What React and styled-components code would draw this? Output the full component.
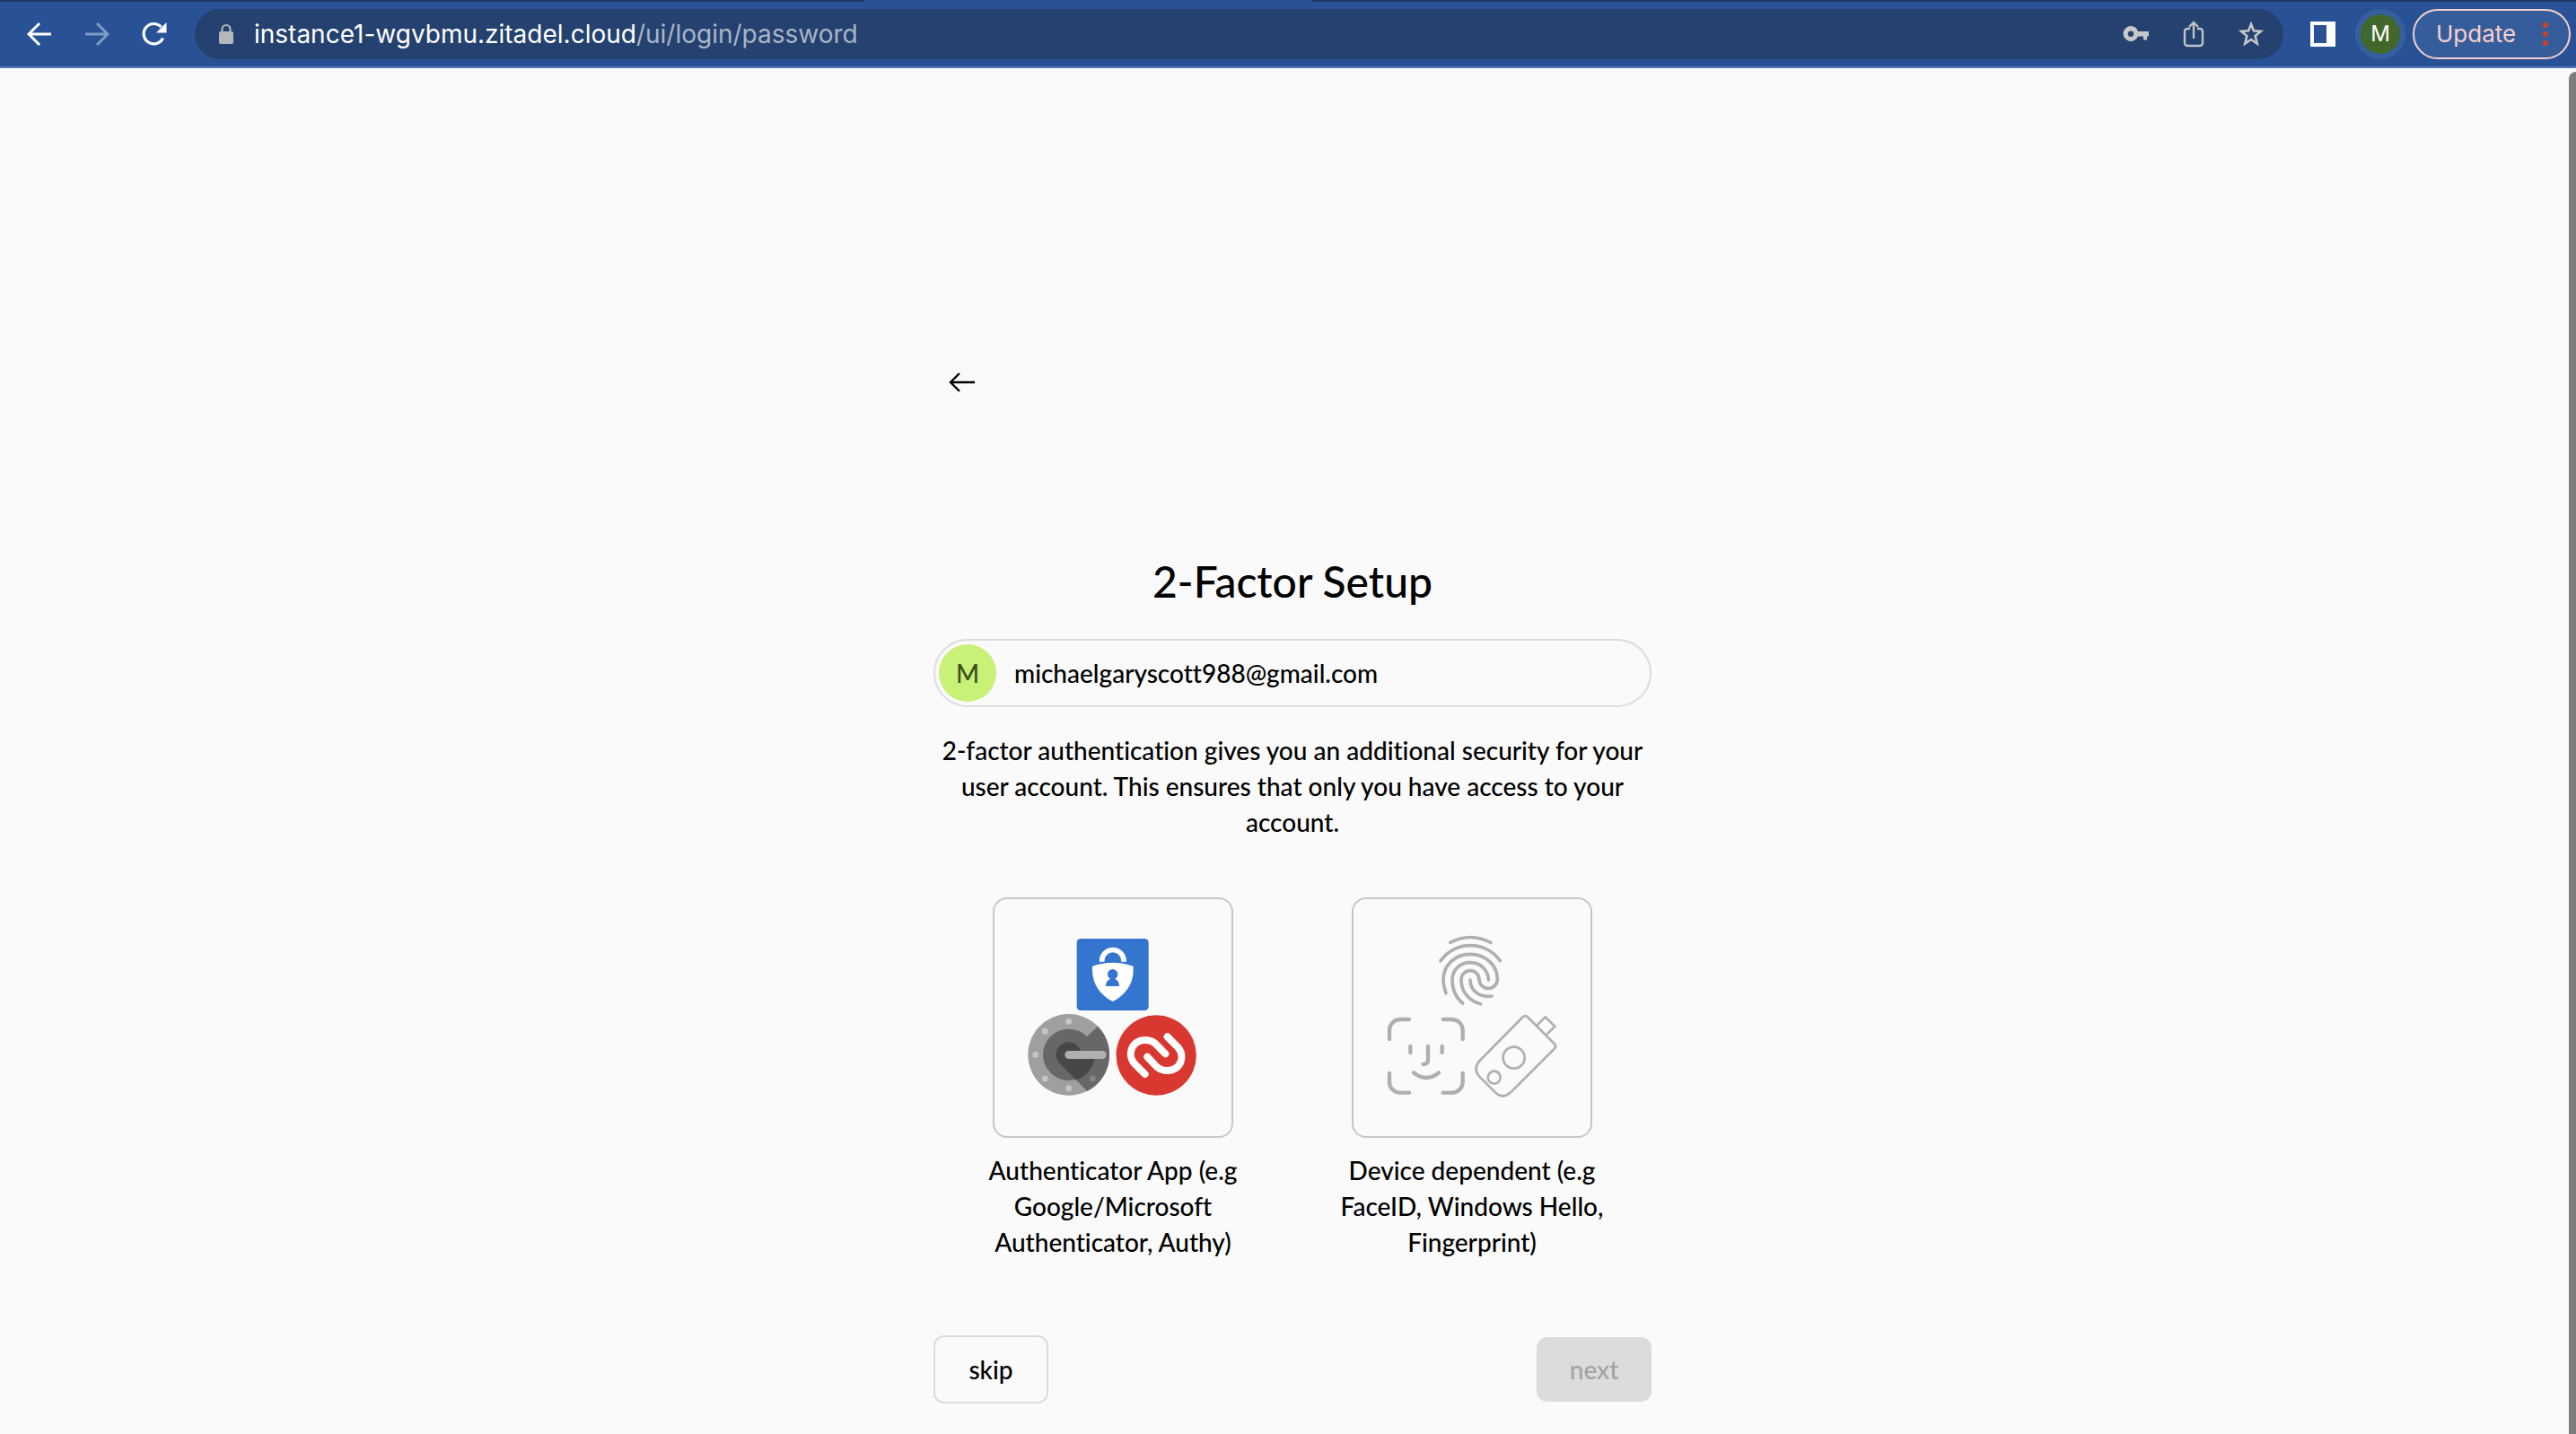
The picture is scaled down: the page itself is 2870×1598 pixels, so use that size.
import React from "react";
import styled, { createGlobalStyle } from "styled-components";

const GlobalStyle = createGlobalStyle`
  *, *::before, *::after { box-sizing: border-box; }
  body { margin: 0; background: #fafafa; overflow: hidden; }
  button, input { font: inherit; }
`;

const Page = styled.div`
  position: relative;
  min-height: 100vh;
  display: flex;
  flex-direction: column;
  font-family: Lato, sans-serif;
  font-size: 28px;
  font-weight: 500;
  font-variant-ligatures: none;
  line-height: 40px;
  color: #000;
`;

const TabStrip = styled.div`
  display: flex;
  height: 2px;
  background: #295296;
`;
const InactiveTabs = styled.span`
  flex: ${(p) => p.$share};
  background: #1c365f;
  border-radius: ${(p) => (p.$left ? "0 0 4px 0" : "0 0 0 4px")};
`;
const ActiveTab = styled.span`
  flex: 499;
`;

const Toolbar = styled.header`
  display: flex;
  align-items: center;
  height: 74px;
  padding: 8px 6px 8px 26px;
  background: #295296;
  border-bottom: 2px solid #5279b0;
  font-family: Inter, sans-serif;
  font-weight: 400;
`;
const IconButton = styled.button`
  display: grid;
  place-items: center;
  width: 36px;
  height: 36px;
  padding: 0;
  border: 0;
  background: none;
  color: ${(p) => p.$color || "#fff"};
`;
const NavButtons = styled.nav`
  display: flex;
  gap: 28px;
  margin-right: 27px;
`;
const AddressBar = styled.div`
  flex: 1;
  display: flex;
  align-items: center;
  height: 56px;
  padding: 0 18px 0 26px;
  border-radius: 28px;
  background: #24416f;
`;
const Url = styled.a`
  flex: 1;
  margin-left: 22px;
  font-size: 28px;
  line-height: 36px;
  color: #a9b5c7;
  text-decoration: none;
`;
const Domain = styled.span`
  color: #fff;
`;
const AddressActions = styled.div`
  display: flex;
  gap: 28px;
`;
const ToolbarEnd = styled.div`
  display: flex;
  align-items: center;
  margin-left: 26px;
`;
const Profile = styled.button`
  width: 56px;
  height: 56px;
  margin: 0 8px 0 18px;
  padding: 0;
  border: 6px solid #365f9f;
  border-radius: 50%;
  background: #41682a;
  color: #fff;
  font-size: 24px;
  line-height: 44px;
`;
const UpdateButton = styled.button`
  display: flex;
  align-items: center;
  justify-content: space-between;
  width: 176px;
  height: 56px;
  padding: 0 23px 0 24px;
  border: 2px solid #f6d0ce;
  border-radius: 28px;
  background: #365d9b;
  color: #f6d0ce;
  font-size: 26px;
`;

const ScrollThumb = styled.div`
  position: absolute;
  top: 80px;
  right: 0;
  bottom: 0;
  width: 8px;
  border-radius: 8px 0 0 0;
  background: #7d7d7d;
`;

const Main = styled.main`
  flex: 1;
  padding: 318px 0 34px 10px;
`;
const Form = styled.form`
  width: 800px;
  max-width: 100%;
  margin: 0 auto;
`;
const BackButton = styled.button`
  display: grid;
  place-items: center;
  width: 64px;
  height: 64px;
  padding: 0;
  border: 0;
  background: none;
  color: #000;
`;
const Title = styled.h1`
  margin: 158px 0 32px;
  font-size: 48px;
  font-weight: 500;
  line-height: 64px;
  text-align: center;
`;
const Account = styled.div`
  display: flex;
  align-items: center;
  gap: 20px;
  height: 76px;
  padding: 4px;
  border: 2px solid #dcdcdc;
  border-radius: 38px;
`;
const Avatar = styled.span`
  width: 64px;
  height: 64px;
  border-radius: 50%;
  background: #c9f077;
  color: #3b4f1a;
  line-height: 64px;
  text-align: center;
`;
const Description = styled.p`
  margin: 28px 0 64px;
  text-align: center;
`;
const Options = styled.div`
  display: grid;
  grid-template-columns: 1fr 1fr;
`;
const Option = styled.label`
  display: flex;
  flex-direction: column;
  align-items: center;
  gap: 16px;
  text-align: center;
`;
const HiddenRadio = styled.input`
  position: absolute;
  opacity: 0;
`;
const OptionCard = styled.span`
  display: flex;
  width: 268px;
  height: 268px;
  border: 2px solid #c7c7c7;
  border-radius: 16px;
`;
const OptionText = styled.span`
  width: 300px;
`;
const Actions = styled.div`
  display: flex;
  align-items: center;
  justify-content: space-between;
  margin-top: 84px;
`;
const ActionButton = styled.button`
  width: 128px;
  height: ${(p) => (p.$outlined ? 76 : 72)}px;
  padding: 0;
  border: ${(p) => (p.$outlined ? "2px solid #dcdcdc" : "0")};
  border-radius: 12px;
  background: ${(p) => (p.$outlined ? "transparent" : "#dcdcdc")};
  color: ${(p) => (p.$outlined ? "#000" : "#a3a3a3")};
`;

const Arrow = ({ flip }) => (
  <svg width="28" height="28" viewBox="0 0 28 28" fill="none" stroke="currentColor" strokeWidth="3">
    <path d={flip ? "M1 14H25M14 2L26 14L14 26" : "M27 14H3M14 2L2 14L14 26"} />
  </svg>
);

const ReloadIcon = () => (
  <svg width="30" height="30" viewBox="0 0 30 30">
    <path d="M24.5 19.5A11.2 11.2 0 1 1 22.5 7" fill="none" stroke="currentColor" strokeWidth="3.2" />
    <path d="M28.500 2V13.500H17Z" fill="currentColor" />
  </svg>
);

const LockIcon = () => (
  <svg width="18" height="24" viewBox="0 0 18 24">
    <path d="M4.500 10V6.500a4.500 4.500 0 0 1 9 0V10" fill="none" stroke="#b4b7bc" strokeWidth="2.200" />
    <rect x="1" y="9" width="16" height="14" rx="2" fill="#b4b7bc" />
  </svg>
);

const KeyIcon = () => (
  <svg width="30" height="20" viewBox="0 0 30 20">
    <path
      fill="currentColor"
      fillRule="evenodd"
      d="M9 1a8.500 8.500 0 1 0 8 11.500H23v4h4v-4h2V7H17A8.500 8.500 0 0 0 9 1Zm0 5.500a3.200 3.200 0 1 1 0 6.400a3.200 3.200 0 0 1 0-6.400Z"
    />
  </svg>
);

const ShareIcon = () => (
  <svg width="24" height="32" viewBox="0 0 24 32" fill="none" stroke="currentColor" strokeWidth="2.400">
    <path d="M8 10H5a3 3 0 0 0-3 3V26a3 3 0 0 0 3 3H19a3 3 0 0 0 3-3V13a3 3 0 0 0-3-3H16M12 21V3M7 8L12 3L17 8" />
  </svg>
);

const StarIcon = () => (
  <svg width="30" height="30" viewBox="0 0 30 30" fill="none" stroke="currentColor" strokeWidth="2.600">
    <path d="M15 4L17.900 11.300L25.900 11.900L19.700 17L21.700 25.500L15 21L8.300 25.500L10.300 17L4.100 11.900L12.100 11.300Z" />
  </svg>
);

const SidePanelIcon = () => (
  <svg width="28" height="28" viewBox="0 0 28 28">
    <path fill="#fff" fillRule="evenodd" d="M0 0H28V28H0ZM4 4V24H18V4Z" />
  </svg>
);

const DotsIcon = () => (
  <svg width="6" height="28" viewBox="0 0 6 28" fill="#cf402e">
    <circle cx="3" cy="4" r="3" />
    <circle cx="3" cy="14" r="3" />
    <circle cx="3" cy="24" r="3" />
  </svg>
);

const BackArrow = () => (
  <svg width="32" height="24" viewBox="0 0 32 24" fill="none" stroke="currentColor" strokeWidth="2.400">
    <path d="M30 12H3M13 2L3 12L13 22" />
  </svg>
);

const AuthenticatorArt = () => (
  <svg width="264" height="264" viewBox="54 36 792 792" aria-hidden="true">
    <rect x="329" y="168" width="240" height="240" rx="13" fill="#3375cf" />
    <path d="M413 245V242A36 36 0 0 1 486 242V245" fill="none" stroke="#fff" strokeWidth="17" />
    <path d="M381 260Q449 237 518 260V274C518 320 491 358 449 378C408 358 381 320 381 274Z" fill="#fff" />
    <circle cx="449" cy="287" r="17" fill="#3375cf" />
    <path d="M426 327C426 315 431 307 441 302V296H457V302C467 307 471 315 471 327Z" fill="#3375cf" />

    <circle cx="302" cy="556" r="136" fill="#9f9f9f" />
    <circle cx="302" cy="556" r="86" fill="#676767" />
    <path d="M302 556L364 494L399 461A136 136 0 0 1 364 678L302 616Z" fill="#676767" />
    <path d="M302 514A42 42 0 0 0 272 586L326 640A87 87 0 0 0 388 570L341 541A42 42 0 0 0 302 514Z" fill="#474747" />
    <rect x="289" y="543" width="139" height="27" rx="13.500" fill="#b0b0b0" />
    <g fill="#c4c4c4">
      <circle cx="302" cy="445" r="10.500" />
      <circle cx="223" cy="478" r="10.500" />
      <circle cx="191" cy="556" r="10.500" />
      <circle cx="223" cy="636" r="10.500" />
      <circle cx="302" cy="668" r="10.500" />
    </g>
    <circle cx="382" cy="636" r="10" fill="#858585" />

    <circle cx="594.500" cy="558" r="134" fill="#d93831" />
    <g fill="none" stroke="#fff" strokeWidth="24" strokeLinecap="round">
      <path d="M557 621L524 588C495 559 511 507 558 507C576 507 588 514 597 524L625 553" />
      <path d="M632 496L665 529C694 558 678 609 631 609C613 609 601 602 592 592L565 563" />
    </g>
  </svg>
);

const DeviceArt = () => (
  <svg
    width="264"
    height="264"
    viewBox="54 36 792 792"
    fill="none"
    stroke="#afafaf"
    strokeLinecap="round"
    aria-hidden="true"
  >
    <g strokeWidth="11">
      <path d="M377 181Q444 146 513 181" />
      <path d="M345 242C395 174 495 174 544 242" />
      <path d="M363 350C358 335 354 322 354 306C354 255 394 220 444 220C497 220 535 258 535 304A30.500 30.500 0 0 1 474 304A30 30 0 0 0 414 306C414 346 440 376 479 386" />
      <path d="M419 384C396 365 384 338 384 306C384 272 410 248 444 248C480 248 505 275 505 306" />
      <path d="M444 306C444 341 475 366 516 360" />
    </g>
    <g strokeWidth="13">
      <path d="M174 504V474A36 36 0 0 1 210 438H240" />
      <path d="M353 438H383A36 36 0 0 1 419 474V504" />
      <path d="M174 618V647A36 36 0 0 0 210 683H240" />
      <path d="M353 683H383A36 36 0 0 0 419 647V618" />
      <path d="M244 528V549M350 528V549" />
      <path d="M303 528V573Q303 588 287 588" />
      <path d="M255 616Q297 650 339 616" />
    </g>
    <g strokeWidth="8" strokeLinecap="butt">
      <path d="M620 430Q628 423 636 430L726 520Q733 527 726 535L579 682Q552 706 528 682L474 628Q453 604 474 578Z" />
      <circle cx="590" cy="566" r="36" />
      <circle cx="524" cy="632" r="21" />
      <path d="M668 457L695 430L727 461L700 488" />
    </g>
  </svg>
);

export default function App() {
  return (
    <Page>
      <GlobalStyle />
      <TabStrip>
        <InactiveTabs $share={963} $left />
        <ActiveTab />
        <InactiveTabs $share={1408} />
      </TabStrip>
      <Toolbar>
        <NavButtons>
          <IconButton aria-label="Back">
            <Arrow />
          </IconButton>
          <IconButton aria-label="Forward" $color="#7f9cc4">
            <Arrow flip />
          </IconButton>
          <IconButton aria-label="Reload">
            <ReloadIcon />
          </IconButton>
        </NavButtons>
        <AddressBar>
          <LockIcon />
          <Url href="#">
            <Domain>instance1-wgvbmu.zitadel.cloud</Domain>/ui/login/password
          </Url>
          <AddressActions>
            <IconButton aria-label="Passwords" $color="#c6c7c9">
              <KeyIcon />
            </IconButton>
            <IconButton aria-label="Share" $color="#c0c2c6">
              <ShareIcon />
            </IconButton>
            <IconButton aria-label="Bookmark" $color="#c6c7c9">
              <StarIcon />
            </IconButton>
          </AddressActions>
        </AddressBar>
        <ToolbarEnd>
          <IconButton aria-label="Side panel">
            <SidePanelIcon />
          </IconButton>
          <Profile>M</Profile>
          <UpdateButton>
            Update
            <DotsIcon />
          </UpdateButton>
        </ToolbarEnd>
      </Toolbar>
      <Main>
        <Form onSubmit={(e) => e.preventDefault()}>
          <BackButton type="button" aria-label="Go back">
            <BackArrow />
          </BackButton>
          <Title>2-Factor Setup</Title>
          <Account>
            <Avatar>M</Avatar>
            <span>michaelgaryscott988@gmail.com</span>
          </Account>
          <Description>
            2-factor authentication gives you an additional security for your user account. This ensures that only you
            have access to your account.
          </Description>
          <Options>
            <Option>
              <HiddenRadio type="radio" name="provider" value="app" />
              <OptionCard>
                <AuthenticatorArt />
              </OptionCard>
              <OptionText>Authenticator App (e.g Google/Microsoft Authenticator, Authy)</OptionText>
            </Option>
            <Option>
              <HiddenRadio type="radio" name="provider" value="device" />
              <OptionCard>
                <DeviceArt />
              </OptionCard>
              <OptionText>Device dependent (e.g FaceID, Windows Hello, Fingerprint)</OptionText>
            </Option>
          </Options>
          <Actions>
            <ActionButton type="button" $outlined>
              skip
            </ActionButton>
            <ActionButton type="submit" disabled>
              next
            </ActionButton>
          </Actions>
        </Form>
      </Main>
      <ScrollThumb />
    </Page>
  );
}
